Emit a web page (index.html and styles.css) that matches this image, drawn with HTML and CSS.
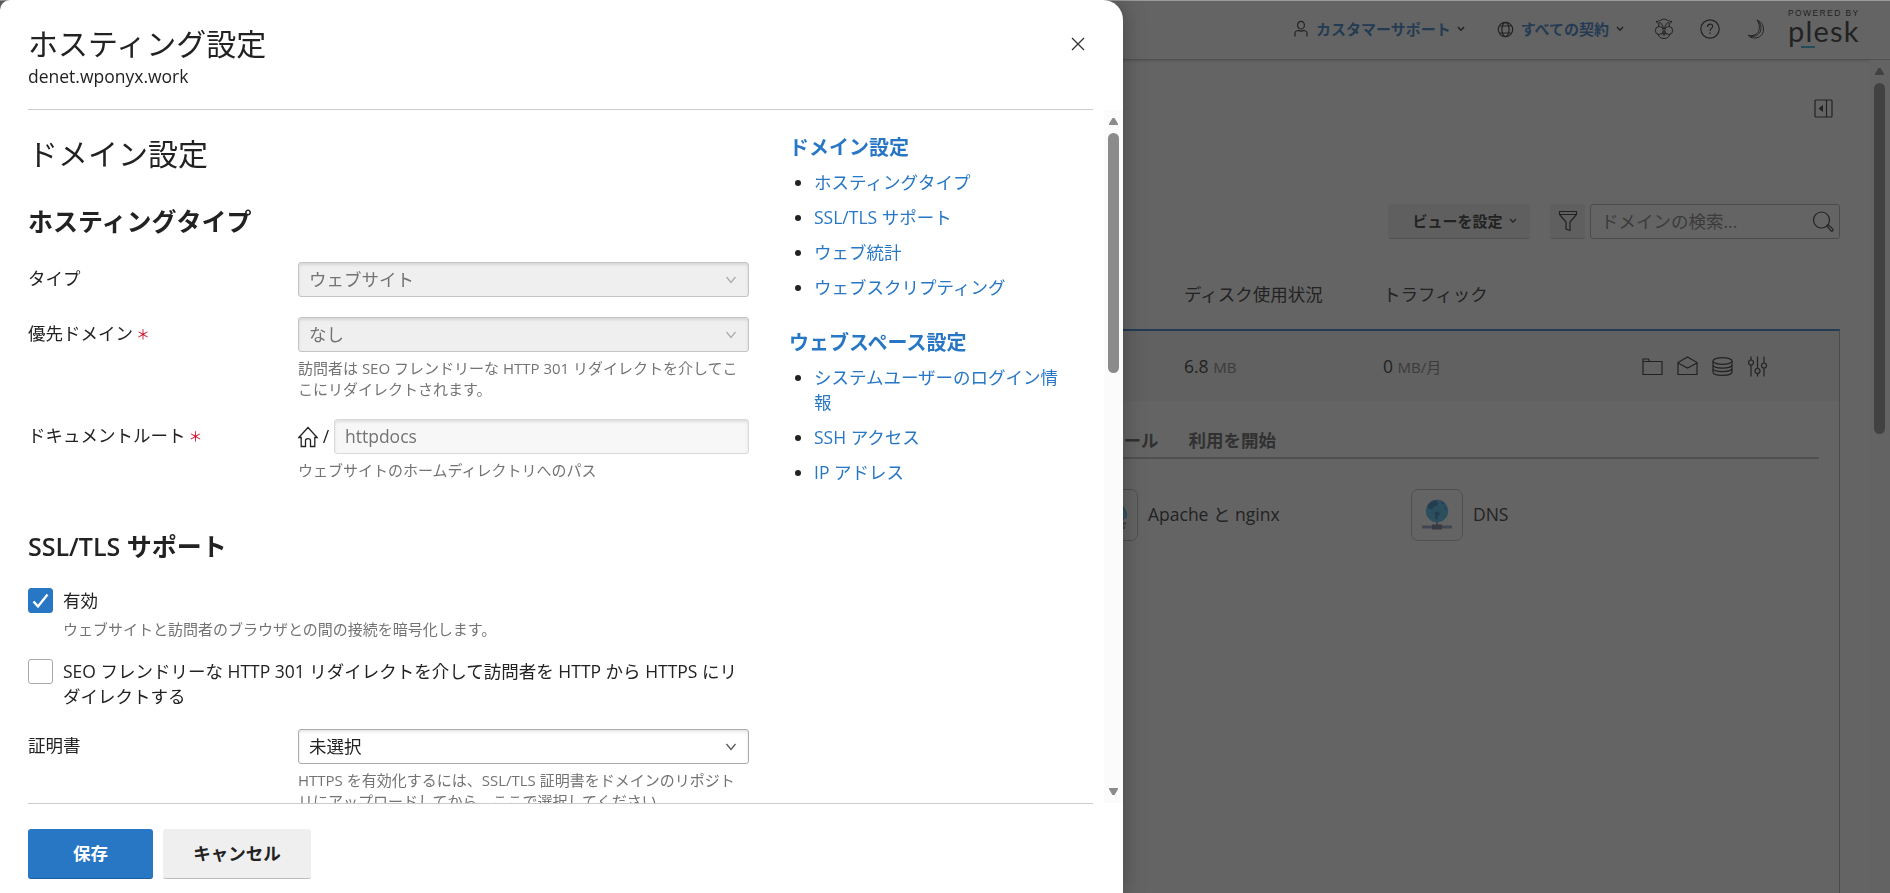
FILE: index.html
```html
<!DOCTYPE html>
<html lang="ja">
<head>
<meta charset="utf-8">
<title>ホスティング設定</title>
<link rel="stylesheet" href="styles.css">
</head>
<body>
<div class="page">
  <header class="topbar">
    <a class="account">
      <svg class="ico" width="16" height="18" viewBox="0 0 16 18"><ellipse cx="8" cy="5.2" rx="3.4" ry="3.8"/><path d="M2 16.500v-3c0-2 1.500-3 3.500-3 .8.700 4.200.700 5 0 2 0 3.500 1 3.500 3v3"/></svg>
      <b>カスタマーサポート</b>
      <svg class="ico bold" width="8" height="6" viewBox="0 0 8 6"><path d="M1 1l3 3.200L7 1"/></svg>
    </a>
    <a class="subscription">
      <svg class="ico" width="17" height="17" viewBox="0 0 17 17"><circle cx="8.500" cy="8.500" r="7.200"/><ellipse cx="8.500" cy="8.500" rx="3.600" ry="7.200"/><path d="M2.500 5h12M2.500 12h12"/></svg>
      <b>すべての契約</b>
      <svg class="ico bold" width="8" height="6" viewBox="0 0 8 6"><path d="M1 1l3 3.200L7 1"/></svg>
    </a>
    <div class="tools">
      <svg class="ico thin" width="20" height="22" viewBox="0 0 20 22"><path d="M2 3.500C5 3.800 8 1 10 1s5 2.800 8 2.500M2 3.500l3 2.500-.5 3M18 3.500L15 6l.5 3M5 4.500C7.500 5 9 7 9.500 11M15 4.500C12.500 5 11 7 10.500 11M4 16c.8 3 3 4.500 6 4.500s5.200-1.500 6-4.500M8.300 15.300h3.400L10 17.500zM10 13v2"/><circle cx="5.300" cy="12.500" r="4"/><circle cx="14.700" cy="12.500" r="4"/></svg>
      <svg class="ico" width="20" height="20" viewBox="0 0 20 20"><circle cx="10" cy="10" r="9.200"/><path d="M7.500 8c0-3.800 5.200-3.800 5.200-.7 0 2-2.700 2.300-2.700 4.700M10 13.500v1.500"/></svg>
      <svg class="ico thin" width="20" height="20" viewBox="0 0 20 20"><path d="M11 1c9.500 3.500 8.500 18-2.500 18-3 0-5-1-6.500-2.800 10 2.300 14.500-6.700 9-15.200zM12.500 2.500c6 8 .5 15.500-8 15"/></svg>
    </div>
    <div class="logo">
      <span class="powered">POWERED BY</span>
      <span class="brand">plesk</span>
      <i class="brand-dash"></i>
    </div>
  </header>

  <div class="viewport">
    <main class="content">
      <div class="toggle-row">
        <svg class="ico" width="19" height="19" viewBox="0 0 19 19"><rect x="1" y="1" width="17" height="17" rx="1"/><path d="M12.500 1v17"/><path class="solid" d="M9 6v7L4.500 9.500z"/></svg>
      </div>
      <div class="toolbar">
        <button class="view-btn">ビューを設定<svg class="ico" width="8" height="6" viewBox="0 0 8 6"><path d="M1 1l3 3.200L7 1"/></svg></button>
        <button class="filter-btn"><svg class="ico" width="20" height="22" viewBox="0 0 20 22"><path d="M1.500 1.500h17v3L12 12v8.500L8 19v-7L1.500 4.500zM1.500 4.500h17"/></svg></button>
        <div class="search"><span>ドメインの検索...</span><svg class="ico" width="22" height="22" viewBox="0 0 22 22"><circle cx="9.500" cy="9" r="8"/><path d="M15 15l1.300-1.300 4.500 4.500c.8 1.200-.8 2.500-1.800 1.600z"/></svg></div>
      </div>
      <div class="table-head"><span>ディスク使用状況</span><span>トラフィック</span></div>
      <section class="panel">
        <div class="domain-row">
          <span>6.8 <small>MB</small></span>
          <span>0 <small>MB/月</small></span>
          <div class="row-icons">
            <svg class="ico" width="21" height="21" viewBox="0 0 21 21"><path d="M1 18.500V3h5.500l1 2.500H20v13zM1 5.500h6.500"/></svg>
            <svg class="ico" width="21" height="21" viewBox="0 0 21 21"><path d="M1 6.500L10.500 1 20 6.500v12H1zM1 7l9.500 5L20 7"/></svg>
            <svg class="ico" width="21" height="21" viewBox="0 0 21 21"><ellipse cx="10.500" cy="5" rx="9.500" ry="3.300"/><path d="M1 5v11c0 4.500 19 4.500 19 0V5M1 8.700c0 4.500 19 4.500 19 0M1 12.300c0 4.500 19 4.500 19 0"/></svg>
            <svg class="ico" width="21" height="21" viewBox="0 0 21 21"><path d="M4 .5v3.500M4 9v11.500M10.500.5v12M10.500 17.500v3M17 .5V7M17 12v8.500"/><circle cx="4" cy="6.500" r="2.500"/><circle cx="10.500" cy="15" r="2.500"/><circle cx="17" cy="9.500" r="2.500"/></svg>
          </div>
        </div>
        <nav class="tabs"><span>メール</span><span>利用を開始</span></nav>
        <div class="tiles">
          <div class="tile">
            <div class="tile-box"><svg width="36" height="36" viewBox="0 0 36 36"><path fill="#35aaf0" d="M3 21C3 -1 33 -1 33 20l-2.500 2C29 13 8 13 6 21z"/><path fill="none" stroke="#d5effa" d="M24 7c4 3 6 8 7.500 13"/><path fill="#8d9cb5" d="M27 20h3v3h-3zM29 25h3v3h-3zM28 29h3v3h-3z"/></svg></div>
            <span>Apache と nginx</span>
          </div>
          <div class="tile">
            <div class="tile-box"><svg width="36" height="36" viewBox="0 0 36 36"><path fill="#8d9cc0" d="M17 24h2v4h-2zM3 28.500h30v3H3z"/><path fill="#66728f" d="M13 27.500h10v5H13z"/><circle cx="18" cy="14" r="11.200" fill="#45b7ea"/><path fill="#2a7fba" d="M9 8c2-3.500 6-5 9.500-4.800l-1 2 2.500 1-2 2.800-3 .5-2 3-2.500-.5-2-1.500zM15.500 15l4-.5 1.500 2.500-2 2.500-.5 3.500-2-1zM22.500 4l3.500 3-3 .5zM25.500 9l3 3.500-3-.5z"/></svg></div>
            <span>DNS</span>
          </div>
        </div>
      </section>
    </main>
    <div class="page-scroll"><i class="arrow up"></i><i class="thumb"></i></div>
  </div>
</div>

<div class="backdrop"></div>

<div class="dialog">
  <header class="dialog-head">
    <div>
      <h1>ホスティング設定</h1>
      <p>denet.wponyx.work</p>
    </div>
    <svg class="close" width="14" height="14" viewBox="0 0 14 14"><path d="M1 1l12 12M13 1L1 13"/></svg>
  </header>

  <div class="dialog-body">
    <form class="form">
      <h2>ドメイン設定</h2>
      <h3>ホスティングタイプ</h3>
      <div class="row">
        <label>タイプ</label>
        <div class="field"><div class="select disabled"><span>ウェブサイト</span><svg width="12" height="8" viewBox="0 0 12 8"><path d="M1.500 1L6 6.500 10.500 1"/></svg></div></div>
      </div>
      <div class="row">
        <label>優先ドメイン<em>＊</em></label>
        <div class="field">
          <div class="select disabled"><span>なし</span><svg width="12" height="8" viewBox="0 0 12 8"><path d="M1.500 1L6 6.500 10.500 1"/></svg></div>
          <p class="hint">訪問者は SEO フレンドリーな HTTP 301 リダイレクトを介してここにリダイレクトされます。</p>
        </div>
      </div>
      <div class="row">
        <label>ドキュメントルート<em>＊</em></label>
        <div class="field">
          <div class="path">
            <svg class="home" width="20" height="22" viewBox="0 0 20 22"><path d="M.8 11.500L10 1.500l9.200 10h-2.400V20.500h-4.300v-6c0-2.500-5-2.500-5 0v6H3.200v-9z"/></svg>
            <span class="slash">/</span>
            <div class="input">httpdocs</div>
          </div>
          <p class="hint">ウェブサイトのホームディレクトリへのパス</p>
        </div>
      </div>

      <h3 class="section">SSL/TLS サポート</h3>
      <div class="check-row">
        <span class="box checked"><svg width="17" height="16" viewBox="0 0 17 16"><path d="M1.500 8.500l4.500 5L15.500 1.500"/></svg></span>
        <div><p>有効</p><p class="hint">ウェブサイトと訪問者のブラウザとの間の接続を暗号化します。</p></div>
      </div>
      <div class="check-row second">
        <span class="box"></span>
        <div><p>SEO フレンドリーな HTTP 301 リダイレクトを介して訪問者を HTTP から HTTPS にリダイレクトする</p></div>
      </div>
      <div class="row">
        <label>証明書</label>
        <div class="field">
          <div class="select"><span>未選択</span><svg width="12" height="8" viewBox="0 0 12 8"><path d="M1.500 1L6 6.500 10.500 1"/></svg></div>
          <p class="hint">HTTPS を有効化するには、SSL/TLS 証明書をドメインのリポジトリにアップロードしてから、ここで選択してください。</p>
        </div>
      </div>
    </form>

    <nav class="toc">
      <h4>ドメイン設定</h4>
      <ul>
        <li><a>ホスティングタイプ</a></li>
        <li><a>SSL/TLS サポート</a></li>
        <li><a>ウェブ統計</a></li>
        <li><a>ウェブスクリプティング</a></li>
      </ul>
      <h4>ウェブスペース設定</h4>
      <ul>
        <li><a>システムユーザーのログイン情報</a></li>
        <li><a>SSH アクセス</a></li>
        <li><a>IP アドレス</a></li>
      </ul>
    </nav>

    <div class="dialog-scroll"><i class="arrow up"></i><i class="thumb"></i><i class="arrow down"></i></div>
  </div>

  <footer class="dialog-foot">
    <button class="btn primary">保存</button>
    <button class="btn">キャンセル</button>
  </footer>
</div>
</body>
</html>
```

FILE: styles.css
```css
* { box-sizing: border-box; }

body {
  margin: 0;
  height: 893px;
  overflow: hidden;
  background: #fff;
  color: #222;
  font: 17.5px/25px "Open Sans", "Noto Sans CJK JP", sans-serif;
}

h1, h2, h3, h4, p, ul { margin: 0; padding: 0; }

button {
  border: 0;
  padding: 0;
  color: #222;
  font: inherit;
  font-weight: 600;
}

.ico {
  flex: none;
  fill: none;
  stroke: #222;
  stroke-width: 1.2;
}
.ico.bold { stroke-width: 1.5; }
.ico.thin { stroke-width: 1; }
.ico .solid { fill: #222; stroke: none; }

/* Page behind the dialog */

.page {
  display: flex;
  flex-direction: column;
  height: 893px;
}

.topbar {
  display: flex;
  justify-content: flex-end;
  height: 60px;
  padding-right: 29px;
  border-bottom: 1px solid #bbb;
  box-shadow: 0 1px 3px rgba(0, 0, 0, .2);
}

.account, .subscription {
  display: flex;
  align-items: center;
  height: 58px;
  color: #2877c5;
  font-size: 15px;
}
.account b { margin: 0 6px 0 7px; }
.subscription { margin-left: 32px; }
.subscription b { margin: 0 7px 0 7px; }

.tools {
  display: flex;
  align-items: center;
  gap: 26px;
  height: 58px;
  margin: 0 22px 0 30px;
}

.logo {
  display: flex;
  flex-direction: column;
  width: 73px;
  padding-top: 7px;
}
.powered {
  height: 12px;
  font: 8.500px/12px "Liberation Sans", sans-serif;
  letter-spacing: 1.400px;
  white-space: nowrap;
}
.brand {
  height: 27px;
  font: 29px/24px Lato, sans-serif;
  letter-spacing: 1.200px;
}
.brand-dash {
  width: 14px;
  height: 2px;
  margin-left: 13px;
  background: #28aadc;
}

.viewport {
  display: flex;
  flex: 1;
  min-height: 0;
}

.content {
  flex: 1;
  padding: 39px 30px 0 1050px;
}

.toggle-row {
  display: flex;
  justify-content: flex-end;
  height: 105px;
  padding-right: 7px;
}

.toolbar {
  display: flex;
  justify-content: flex-end;
  height: 35px;
}
.view-btn, .filter-btn {
  display: flex;
  align-items: center;
  justify-content: center;
  background: #efefef;
  border-bottom: 1px solid #bbb;
  border-radius: 3px;
}
.view-btn {
  gap: 6px;
  width: 142px;
  padding-left: 11px;
  font-size: 15px;
}
.filter-btn {
  width: 35px;
  margin: 0 5px 0 20px;
}
.search {
  display: flex;
  align-items: center;
  justify-content: space-between;
  width: 250px;
  padding: 0 5px 0 10px;
  border: 1px solid #aaa;
  border-radius: 3px;
  color: #777;
}

.table-head, .domain-row {
  display: grid;
  grid-template-columns: 199px 1fr auto;
  align-items: center;
  padding-left: 134px;
}
.table-head { height: 90px; padding-top: 20px; }

.panel {
  height: 600px;
  border-top: 2px solid #2877c5;
  border-right: 1px solid #aaa;
}
.domain-row {
  height: 70px;
  padding: 1px 71px 0 134px;
  background: #f3f3f3;
}
.domain-row small { font-size: 15px; color: #777; }
.row-icons { display: flex; gap: 14px; }

.tabs {
  display: flex;
  gap: 30px;
  height: 58px;
  margin-right: 20px;
  padding: 27px 0 0 56px;
  border-bottom: 2px solid #bbb;
  color: #555;
  font-weight: 600;
}

.tiles {
  display: grid;
  grid-template-columns: 325px 325px;
  padding: 30px 0 0 36px;
}
.tile { display: flex; align-items: center; gap: 10px; }
.tile span { margin-top: -2px; }
.tile-box {
  display: flex;
  align-items: center;
  justify-content: center;
  width: 52px;
  height: 52px;
  border: 1px solid #bbb;
  border-radius: 7px;
}

.page-scroll {
  width: 20px;
  padding: 8px 1px 0 0;
  background: #fbfbfb;
}

.backdrop {
  position: fixed;
  inset: 0;
  background: rgba(34, 34, 34, .7);
  border-top: 1px solid rgba(255, 255, 255, .35);
}

/* Scrollbars */

.arrow {
  display: block;
  width: 9px;
  height: 7px;
  margin: 0 auto;
  background: #8b8b8b;
}
.arrow.up { clip-path: polygon(38% 0, 62% 0, 100% 85%, 100% 100%, 0 100%, 0 85%); }
.arrow.down { clip-path: polygon(0 0, 100% 0, 100% 15%, 62% 100%, 38% 100%, 0 15%); }
.thumb {
  display: block;
  width: 11px;
  margin: 8px auto 0;
  border-radius: 6px;
  background: #8b8b8b;
}
.page-scroll .thumb { height: 351px; }

/* Dialog */

.dialog {
  position: fixed;
  top: 0;
  left: 0;
  display: flex;
  flex-direction: column;
  width: 1123px;
  height: 893px;
  border-radius: 10px 20px 0 0;
  background: #fff;
  box-shadow: 0 0 24px rgba(0, 0, 0, .3);
}

.dialog-head {
  display: flex;
  justify-content: space-between;
  height: 110px;
  margin: 0 30px 0 28px;
  padding-top: 25px;
  border-bottom: 1px solid #ccc;
}
.dialog-head h1, .form h2 {
  font-size: 30px;
  font-weight: 400;
  line-height: 38px;
}
.dialog-head p { line-height: 26px; }
.close {
  margin: 12px 8px 0 0;
  fill: none;
  stroke: #333;
  stroke-width: 1.3;
}

.dialog-body {
  display: flex;
  height: 693px;
  overflow: hidden;
}

.form {
  width: 721px;
  margin-left: 28px;
  padding-top: 25px;
}
.form h3 {
  margin: 33px 0 25px;
  font-size: 25px;
  font-weight: 600;
  line-height: 31px;
}
.form h3.section { margin: 51px 0 26px; }

.row {
  display: grid;
  grid-template-columns: 270px 1fr;
  margin-bottom: 20px;
}
.row label {
  display: flex;
  align-items: flex-start;
  gap: 3px;
  padding-top: 4px;
}
.row em { color: #d0112b; font-style: normal; font-size: 14px; }

.select, .input {
  display: flex;
  align-items: center;
  justify-content: space-between;
  height: 35px;
  padding: 0 11px 0 10px;
  border: 1px solid #aaa;
  border-radius: 3px;
  background: #fff;
  box-shadow: inset 0 2px 3px rgba(0, 0, 0, .1);
}
.select svg { fill: none; stroke: #555; stroke-width: 1.2; }
.select.disabled { background: #efefef; border-color: #c4c4c4; color: #737373; }
.select.disabled svg { stroke: #aaa; }
.input {
  flex: 1;
  background: #f7f7f7;
  border-color: #dadada;
  color: #737373;
}
.path { display: flex; align-items: center; }
.home { fill: none; stroke: #222; stroke-width: 1.3; }
.slash { width: 16px; text-align: center; }

.hint {
  margin: 6px 0 -1px;
  color: #737373;
  font-size: 15px;
  line-height: 21px;
}

.check-row { display: flex; gap: 10px; }
.check-row.second { margin: 20px 0; }
.box {
  display: flex;
  flex: none;
  align-items: center;
  justify-content: center;
  width: 25px;
  height: 25px;
  border: 1px solid #aaa;
  border-radius: 3px;
}
.box.checked { background: #2877c5; border-color: #2877c5; }
.box svg { fill: none; stroke: #fff; stroke-width: 2.400; }

.toc {
  width: 276px;
  margin-left: 40px;
  padding-top: 24px;
  color: #222;
}
.toc h4 {
  color: #2877c5;
  font-size: 20px;
  line-height: 28px;
}
.toc ul { padding-left: 25px; margin: 8px 0 29px; }
.toc li { margin-bottom: 10px; }
.toc a { color: #2877c5; }

.dialog-scroll {
  width: 19px;
  margin-left: auto;
  padding-top: 8px;
  background: #fbfbfb;
}
.dialog-scroll .thumb { height: 240px; margin-bottom: 415px; }

.dialog-foot {
  display: flex;
  gap: 10px;
  flex: 1;
  margin: 0 30px 0 28px;
  padding-top: 25px;
  border-top: 1px solid #ccc;
}
.btn {
  width: 148px;
  height: 50px;
  border-bottom: 1px solid #bbb;
  border-radius: 3px;
  background: #efefef;
}
.btn.primary {
  width: 125px;
  border-color: #1f5fa0;
  background: #2877c5;
  color: #fff;
}
```
